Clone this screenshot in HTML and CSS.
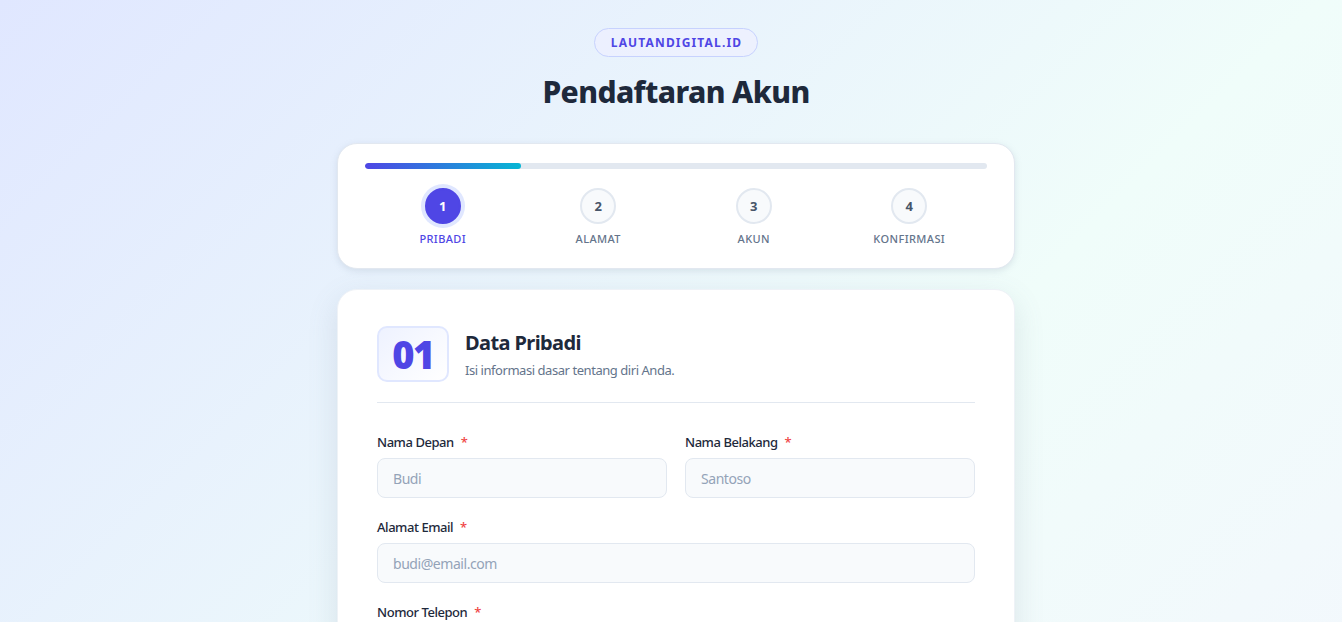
FILE: index.html
```html
<!DOCTYPE html>
<html lang="id">
<head>
<meta charset="utf-8">
<title>Pendaftaran Akun</title>
<link rel="stylesheet" href="styles.css">
</head>
<body>
<main class="page">
  <div class="brand">LAUTANDIGITAL.ID</div>
  <h1 class="title">Pendaftaran Akun</h1>

  <section class="card steps-card">
    <div class="progress"><div class="progress-fill" style="width:25%"></div></div>
    <ol class="steps">
      <li class="step active"><span class="dot">1</span><span class="step-label">Pribadi</span></li>
      <li class="step"><span class="dot">2</span><span class="step-label">Alamat</span></li>
      <li class="step"><span class="dot">3</span><span class="step-label">Akun</span></li>
      <li class="step"><span class="dot">4</span><span class="step-label">Konfirmasi</span></li>
    </ol>
  </section>

  <section class="card form-card">
    <header class="form-head">
      <div class="num-box">01</div>
      <div class="head-text">
        <h2 class="head-title">Data Pribadi</h2>
        <p class="head-sub">Isi informasi dasar tentang diri Anda.</p>
      </div>
    </header>

    <form class="form">
      <div class="row">
        <div class="field">
          <label class="label">Nama Depan <span class="req">*</span></label>
          <input class="input" type="text" placeholder="Budi">
        </div>
        <div class="field">
          <label class="label">Nama Belakang <span class="req">*</span></label>
          <input class="input" type="text" placeholder="Santoso">
        </div>
      </div>
      <div class="field">
        <label class="label">Alamat Email <span class="req">*</span></label>
        <input class="input" type="email" placeholder="budi@email.com">
      </div>
      <div class="field">
        <label class="label">Nomor Telepon <span class="req">*</span></label>
        <input class="input" type="tel" placeholder="+62 812 3456 7890">
      </div>
      <div class="field">
        <label class="label">Tanggal Lahir</label>
        <input class="input" type="text" placeholder="dd/mm/yyyy">
      </div>
    </form>
  </section>
</main>
</body>
</html>
```

FILE: styles.css
```css
* { box-sizing: border-box; }

html {
  background-color: #f3f6fd;
  background-image: linear-gradient(135deg, #e0e7ff 0%, #f0fdfa 50%, #f5f3ff 100%);
  background-size: 100% 1300px;
  background-repeat: no-repeat;
}

body {
  margin: 0;
  font-family: "Noto Sans", "Open Sans", sans-serif;
  color: #1e293b;
}

.page {
  display: flex;
  flex-direction: column;
  align-items: center;
  padding: 28px 0 60px 10px;
}

.brand {
  height: 29px;
  padding: 0 15px 0 16px;
  display: flex;
  align-items: center;
  border: 1px solid #c7d2fe;
  border-radius: 999px;
  background: rgba(238, 240, 255, 0.7);
  color: #4f46e5;
  font-size: 12px;
  font-weight: 700;
  letter-spacing: 1.15px;
}

.title {
  margin: 17px 0 0;
  font-size: 30px;
  line-height: 36px;
  font-weight: 800;
  color: #1e293b;
  letter-spacing: -0.6px;
}

.card {
  width: 678px;
  background: #ffffff;
  border: 1px solid #e2e8f0;
  border-radius: 20px;
}

.steps-card {
  margin-top: 33px;
  padding: 19px 27px 22px;
  box-shadow: 0 2px 6px rgba(148, 163, 184, 0.25);
}

.progress {
  height: 6px;
  border-radius: 3px;
  background: #e2e8f0;
  overflow: hidden;
}

.progress-fill {
  height: 100%;
  border-radius: 3px;
  background: linear-gradient(90deg, #4f46e5, #06b6d4);
}

.steps {
  list-style: none;
  margin: 19px 0 0;
  padding: 0;
  display: grid;
  grid-template-columns: repeat(4, 1fr);
}

.step {
  display: flex;
  flex-direction: column;
  align-items: center;
}

.dot {
  width: 36px;
  height: 36px;
  border-radius: 50%;
  border: 2px solid #e2e8f0;
  background: #f8fafc;
  color: #475569;
  font-size: 13px;
  font-weight: 700;
  display: flex;
  align-items: center;
  justify-content: center;
}

.step.active .dot {
  background: #4f46e5;
  border-color: #4f46e5;
  color: #ffffff;
  box-shadow: 0 0 0 4px #e0e7ff;
}

.step-label {
  margin-top: 8px;
  font-size: 11px;
  line-height: 14px;
  font-weight: 500;
  letter-spacing: 0.4px;
  text-transform: uppercase;
  color: #64748b;
}

.step.active .step-label {
  color: #4f46e5;
}

.form-card {
  margin-top: 20px;
  padding: 36px 39px 40px;
  border-color: #eef2f7;
  box-shadow: 0 10px 30px rgba(100, 116, 139, 0.16);
}

.form-head {
  display: flex;
  gap: 16px;
  padding-bottom: 20px;
  border-bottom: 1px solid #e2e8f0;
}

.num-box {
  width: 72px;
  height: 56px;
  flex-shrink: 0;
  border: 2px solid #e0e7ff;
  border-radius: 10px;
  background: linear-gradient(135deg, #eef2ff, #ffffff);
  color: #4f46e5;
  font-size: 38px;
  font-weight: 900;
  letter-spacing: -1.5px;
  display: flex;
  align-items: center;
  justify-content: center;
}

.head-text {
  padding-top: 4px;
}

.head-title {
  margin: 0;
  font-size: 20px;
  line-height: 26px;
  font-weight: 700;
  color: #1e293b;
  letter-spacing: -0.6px;
}

.head-sub {
  margin: 5px 0 0;
  font-size: 13px;
  line-height: 18px;
  color: #64748b;
  letter-spacing: -0.45px;
}

.form {
  margin-top: 29px;
  display: flex;
  flex-direction: column;
  gap: 19px;
}

.row {
  display: grid;
  grid-template-columns: 1fr 1fr;
  gap: 18px;
}

.field {
  display: flex;
  flex-direction: column;
  gap: 6px;
}

.label {
  font-size: 13px;
  line-height: 20px;
  font-weight: 500;
  color: #1e293b;
  letter-spacing: -0.45px;
}

.req {
  color: #ef4444;
  margin-left: 4px;
}

.input {
  height: 40px;
  padding: 0 15px;
  border: 1px solid #e2e8f0;
  border-radius: 8px;
  background: #f8fafc;
  font-family: inherit;
  font-size: 14px;
  color: #1e293b;
  letter-spacing: -0.45px;
  outline: none;
}

.input::placeholder {
  color: #94a3b8;
}
```
